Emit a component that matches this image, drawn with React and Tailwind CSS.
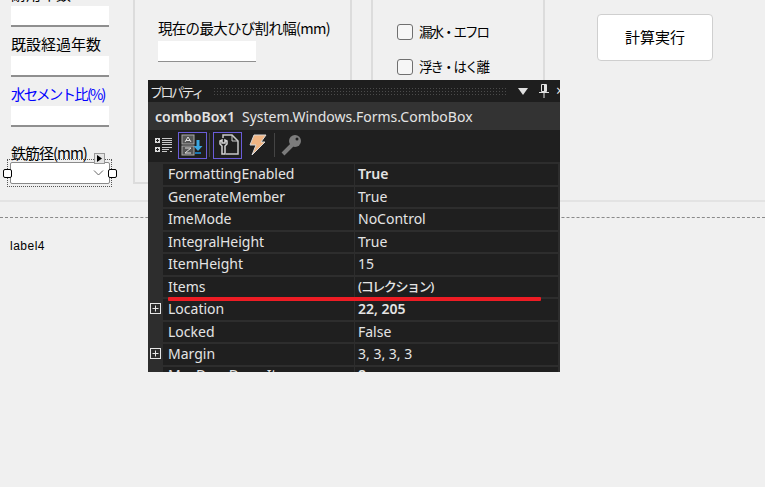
// WinForms designer with the VS properties window floating over it
const jp = { fontFamily: '"Noto Sans CJK JP", sans-serif' };

const rows = [
  { name: 'FormattingEnabled', value: 'True', bold: true },
  { name: 'GenerateMember', value: 'True' },
  { name: 'ImeMode', value: 'NoControl' },
  { name: 'IntegralHeight', value: 'True' },
  { name: 'ItemHeight', value: '15' },
  { name: 'Items', value: '(コレクション)', jpValue: true },
  { name: 'Location', value: '22, 205', bold: true, expand: true },
  { name: 'Locked', value: 'False' },
  { name: 'Margin', value: '3, 3, 3, 3', expand: true },
  { name: 'MaxDropDownItems', value: '8', bold: true, last: true },
];

function Field({ label, className }) {
  return (
    <div>
      <p className={`h-[29px] pb-[5px] flex items-end leading-none whitespace-nowrap ${className}`}>{label}</p>
      <div className="h-[21px] w-[98px] bg-white border-b-2 border-[#8f8f8f]" />
    </div>
  );
}

function Handle({ className }) {
  return <span className={`absolute top-[9px] w-[9px] h-[9px] bg-white border border-black rounded-[2px] ${className}`} />;
}

function CheckRow({ label }) {
  return (
    <label className="flex items-center gap-[6px] h-[35px] text-[13.5px] tracking-[-2px] text-black whitespace-nowrap">
      <span className="w-[16px] h-[16px] bg-[#f6f6f6] border border-[#6f6f6f] rounded-[3px]" />
      {label}
    </label>
  );
}

function ExpandBox() {
  return (
    <svg width="11" height="11" viewBox="0 0 11 11" className="shrink-0" fill="none" stroke="#e6e6e6">
      <rect x="0.5" y="0.5" width="10" height="10" />
      <path d="M2.5 5.5h6M5.5 2.5v6" />
    </svg>
  );
}

function ListIcon() {
  return (
    <svg width="18" height="16" viewBox="0 0 18 16" fill="none">
      <rect x="0" y="1" width="5" height="5" fill="#dcdcdc" />
      <rect x="0" y="10" width="5" height="5" fill="#dcdcdc" />
      <path d="M1 3.5h3M2.5 2v3M1 12.5h3M2.5 11v3" stroke="#222" />
      <path d="M7 1.5h10M7 3.5h10M7 5.5h10M7 7.5h10M7 10.5h10M7 12.5h7M7 14.5h5M15 14.5h2" stroke="#c8c8c8" />
    </svg>
  );
}

function SortIcon() {
  return (
    <svg width="24" height="22" viewBox="0 0 24 22" fill="none">
      <rect x="1" y="1" width="12" height="9" fill="#555" stroke="#aaa" />
      <path d="M4 8l3-5 3 5M5 6.500h4" stroke="#ddd" />
      <rect x="1" y="12" width="12" height="9" fill="#555" stroke="#aaa" />
      <path d="M4 14h6l-6 5h6" stroke="#ddd" />
      <path d="M17 6v7" stroke="#3ba7e0" strokeWidth="3" />
      <path d="M12.500 12l4.500 5 4.500-5z" fill="#3ba7e0" />
      <path d="M14 19h6" stroke="#1b76b0" strokeWidth="2" />
    </svg>
  );
}

function WrenchPageIcon() {
  return (
    <svg width="22" height="22" viewBox="0 0 22 22" fill="none">
      <path d="M6 4V1h9l6 6v13H9" stroke="#c9c9c9" strokeWidth="1.500" />
      <path d="M15 1v6h6" stroke="#c9c9c9" />
      <path d="M3 7v3l2 2v8h3v-8l2-2V7L8 6v3H5V6z" fill="#1f1f1f" stroke="#d4d4d4" strokeWidth="1.500" />
    </svg>
  );
}

function BoltIcon() {
  return (
    <svg width="20" height="22" viewBox="0 0 20 22">
      <path d="M7 1h12l-5 7h4L5 21l4-10H3z" fill="#f0b583" stroke="#d9d9d9" />
    </svg>
  );
}

function KeyIcon() {
  return (
    <svg width="22" height="22" viewBox="0 0 22 22" fill="none">
      <path d="M3 20l9-9" stroke="#7c7c7c" strokeWidth="4" />
      <circle cx="15" cy="7" r="6" fill="#7c7c7c" />
      <circle cx="17" cy="5" r="1.500" fill="#1f1f1f" />
    </svg>
  );
}

function PropertiesPanel() {
  return (
    <div
      className="absolute left-[148px] top-[80px] w-[412px] h-[292px] bg-[#1f1f1f] text-[#e4e4e4] overflow-hidden"
      style={{ fontFamily: '"Noto Sans", "Noto Sans CJK JP", sans-serif' }}
    >
      <div className="h-[22px] flex items-center pl-[2px] bg-[#1e1e1e] whitespace-nowrap">
        <span className="text-[13px] tracking-[-2.4px] leading-none w-[63px] shrink-0" style={jp}>プロパティ</span>
        <div className="h-[8px] w-[293px] shrink-0 bg-[radial-gradient(#4a4a4a_1px,transparent_1px)] bg-[length:3px_3px]" />
        <svg width="10" height="7" viewBox="0 0 10 7" className="ml-[12px] shrink-0"><path d="M0 0h10L5 7z" fill="#e0e0e0" /></svg>
        <svg width="12" height="16" viewBox="0 0 12 16" className="ml-[10px] shrink-0" fill="none" stroke="#e0e0e0">
          <path d="M3.500 1.500h5v7h-5zM1 9.500h10M6 10v5" />
          <path d="M7 2v6" strokeWidth="2" />
        </svg>
        <span className="ml-[6px] text-[14px] leading-none">×</span>
      </div>
      <div className="h-[28px] flex items-center pl-[7px] gap-[7px] bg-[#333333] text-[14px] whitespace-nowrap">
        <span className="font-semibold">comboBox1</span>
        <span>System.Windows.Forms.ComboBox</span>
      </div>
      <div className="h-[30px] flex items-center pl-[7px]">
        <ListIcon />
        <div className="ml-[5px] w-[29px] h-[27px] border border-[#6a5cd8] flex items-center justify-center"><SortIcon /></div>
        <span className="ml-[2px] mr-[3px] w-px h-[24px] bg-[#444]" />
        <div className="w-[29px] h-[27px] border border-[#6a5cd8] flex items-center justify-center"><WrenchPageIcon /></div>
        <div className="ml-[5px]"><BoltIcon /></div>
        <span className="ml-[7px] w-px h-[24px] bg-[#444]" />
        <div className="ml-[5px]"><KeyIcon /></div>
      </div>
      <div className="bg-[#2d2d2d] mt-[2px] h-full">
        {rows.map((r) => (
          <div key={r.name} className="flex h-[22.5px] text-[14px] leading-none">
            <div className="w-[15px] shrink-0 flex items-center justify-center pr-[1px]">
              {r.expand && <ExpandBox />}
            </div>
            <div className={`w-[191px] shrink-0 flex items-center pl-[5px] bg-[#1f1f1f] border-t-2 border-[#2d2d2d] ${r.last ? 'pb-[3px]' : ''}`}>{r.name}</div>
            <div
              className={`w-[203px] shrink-0 flex items-center pl-[3px] ml-[1px] bg-[#1f1f1f] border-t-2 border-[#2d2d2d] ${r.last ? 'pb-[3px]' : ''} ${r.bold ? 'font-semibold' : ''} ${r.jpValue ? 'text-[13px] tracking-[-1.400px] font-medium' : ''}`}
            >
              {r.value}
            </div>
          </div>
        ))}
      </div>
      <div className="absolute left-[20px] top-[217px] w-[373px] h-[4px] bg-[#ed1c24] rounded-[1px]" />
    </div>
  );
}

export default function App() {
  return (
    <div className="relative w-[765px] h-[487px] bg-[#f0f0f0] overflow-hidden" style={jp}>
      <div className="h-[202px] border-b-2 border-[#e3e3e3] flex">
        <div className="w-[133px] shrink-0 pl-[11px] flex flex-col -mt-[23px]">
          <Field label="耐用年数" className="text-[15px] text-black" />
          <Field label="既設経過年数" className="text-[15px] text-black" />
          <Field label="水セメント比(%)" className="text-[14.5px] tracking-[-1.8px] text-[#0000ff]" />
          <div className="relative mt-[32px] -ml-[4px] w-[105px] h-[28px] border border-dotted border-[#555]">
            <p className="absolute left-[3px] -top-[15px] text-[15px] tracking-[-1px] leading-none text-black whitespace-nowrap">鉄筋径(mm)</p>
            <div className="absolute left-[2px] top-[2px] right-[1px] h-[22px] bg-white border border-[#8a8a8a] rounded-[2px] flex items-center justify-end pr-[5px]">
              <svg width="11" height="6" viewBox="0 0 11 6" fill="none" stroke="#666"><path d="M1 0.500l4.500 4.500 4.500-4.500" /></svg>
            </div>
            <Handle className="-left-[5px]" />
            <Handle className="-right-[6px]" />
            <span className="absolute right-[6px] -top-[7px] w-[11px] h-[11px] bg-[#e4e4e4] border border-[#999] flex items-center justify-center">
              <svg width="5" height="7" viewBox="0 0 5 7"><path d="M0 0l5 3.500L0 7z" fill="#000" /></svg>
            </span>
          </div>
        </div>
        <div className="w-[219px] shrink-0 h-[184px] border-l-2 border-b-2 border-r-2 border-[#dcdcdc] pl-[23px]">
          <p className="-mt-[15px] ml-[14px] mb-[22px] text-[14px] leading-none text-black whitespace-nowrap">ひび割れ発生状況</p>
          <p className="text-[14.5px] tracking-[-0.7px] leading-none text-black whitespace-nowrap">現在の最大ひび割れ幅(mm)</p>
          <div className="mt-[5px] h-[21px] w-[98px] bg-white border-b border-[#8f8f8f]" />
        </div>
        <div className="ml-[19px] w-[174px] shrink-0 h-[184px] border-l-2 border-r-2 border-[#dcdcdc] pl-[24px]">
          <p className="-mt-[15px] -ml-[10px] mb-[15px] text-[14px] leading-none text-black whitespace-nowrap">その他の劣化</p>
          <CheckRow label="漏水・エフロ" />
          <CheckRow label="浮き・はく離" />
        </div>
        <div className="pl-[52px] pt-[14px]">
          <button className="w-[116px] h-[47px] bg-white border border-[#cfcfcf] rounded-[4px] text-[15px] text-black">計算実行</button>
        </div>
      </div>
      <div className="mt-[15px] border-t border-dashed border-[#8a8a8a]" />
      <p className="mt-[22px] pl-[10px] text-[12px] tracking-[0.5px] leading-none text-black" style={{ fontFamily: '"Liberation Sans", sans-serif' }}>label4</p>
      <PropertiesPanel />
    </div>
  );
}
